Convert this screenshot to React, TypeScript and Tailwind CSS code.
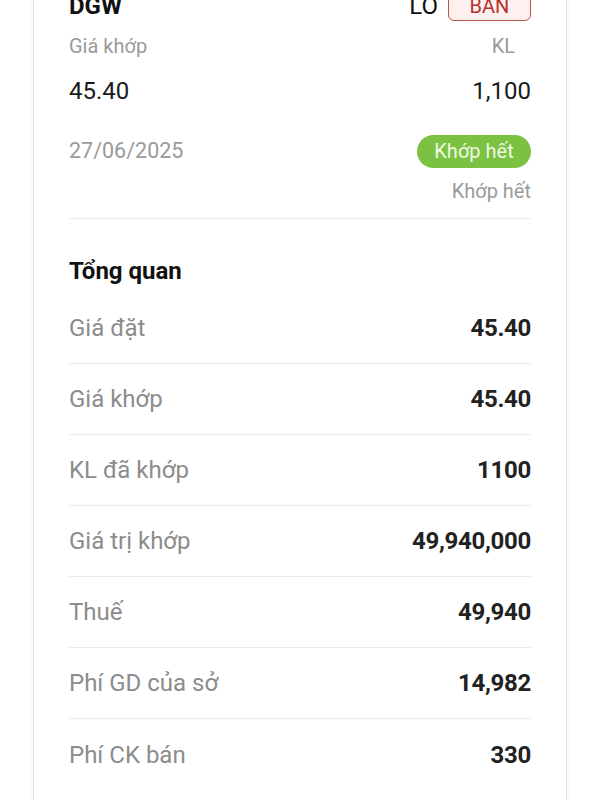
import React from "react";

const rows: [string, string][] = [
  ["Giá đặt", "45.40"],
  ["Giá khớp", "45.40"],
  ["KL đã khớp", "1100"],
  ["Giá trị khớp", "49,940,000"],
  ["Thuế", "49,940"],
  ["Phí GD của sở", "14,982"],
  ["Phí CK bán", "330"],
];

export default function App() {
  return (
    <div className="w-[600px] h-[800px] overflow-hidden bg-white" style={{ fontFamily: "Roboto, 'Noto Sans', sans-serif" }}>
      <div className="mx-[33px] -mt-[30px] h-[860px] bg-white border-x border-[#e3e3e3] shadow-[0_0_4px_rgba(0,0,0,0.08)] px-[35px] pt-[22px]">
        <div className="flex items-center justify-between h-[28px]">
          <span className="text-[24px] font-bold text-[#111] leading-none">DGW</span>
          <div className="flex items-center gap-[10px]">
            <span className="text-[24px] text-[#111] leading-none">LÔ</span>
            <span className="h-[30px] w-[83px] flex items-center justify-center rounded-[6px] border border-[#b35752] bg-[#fdf1f0] text-[20px] text-[#b8322c] leading-none">BÁN</span>
          </div>
        </div>
        <div className="mt-[14px] flex justify-between h-[24px] items-center text-[20px] text-[#9a9a9a]">
          <span>Giá khớp</span>
          <span className="pr-[16px]">KL</span>
        </div>
        <div className="mt-[19px] flex justify-between h-[28px] items-center text-[24px] text-[#1a1a1a]">
          <span>45.40</span>
          <span>1,100</span>
        </div>
        <div className="mt-[30px] flex justify-between h-[32px] items-center">
          <span className="text-[21.5px] text-[#9a9a9a]">27/06/2025</span>
          <span className="h-[33px] w-[114px] rounded-full bg-[#7cc242] flex items-center justify-center text-[20px] text-[#eef8e2]">Khớp hết</span>
        </div>
        <div className="mt-[12px] flex justify-end h-[24px] items-center text-[20px] text-[#9a9a9a]">
          <span>Khớp hết</span>
        </div>
        <div className="mt-[15px] border-t border-[#ebebeb]" />
        <div className="pt-[38px] pb-[8px] h-[74px]">
          <div className="h-[28px] flex items-center text-[24px] font-bold text-[#111]">Tổng quan</div>
        </div>
        {rows.map(([l, v], i) => (
          <div
            key={i}
            className={
              "h-[71px] flex items-center justify-between " +
              (i < rows.length - 1 ? "border-b border-[#ececec]" : "")
            }
          >
            <span className="text-[24px] text-[#8c8c8c]">{l}</span>
            <span className="text-[24px] font-bold text-[#222] tracking-[-0.3px]">{v}</span>
          </div>
        ))}
      </div>
    </div>
  );
}
